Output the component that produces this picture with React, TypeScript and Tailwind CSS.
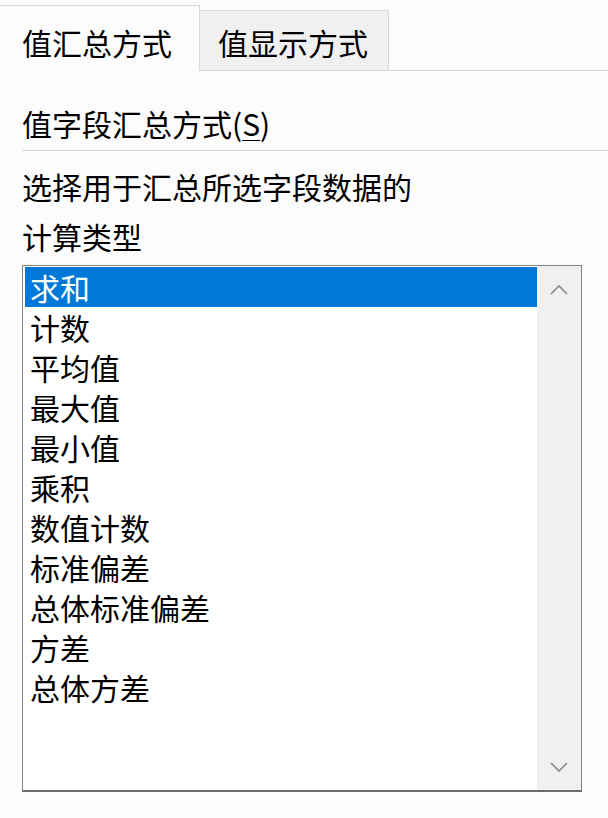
const font = { fontFamily: '"Noto Sans CJK SC", "Noto Sans", sans-serif' }

const items = ["求和", "计数", "平均值", "最大值", "最小值", "乘积", "数值计数", "标准偏差", "总体标准偏差", "方差", "总体方差"]

function Chevron({ up }: { up?: boolean }) {
  return (
    <svg width="20" height="12" viewBox="0 0 20 12" fill="none">
      <polyline
        points={up ? "2,10 10,2 18,10" : "2,2 10,10 18,2"}
        stroke="#8a8a8a"
        strokeWidth="1.6"
      />
    </svg>
  )
}

export default function App() {
  return (
    <div className="w-[608px] h-[818px] bg-[#fcfcfc] text-black text-[30px] overflow-hidden" style={font}>
      <div className="h-[71px] flex items-end border-b border-[#d9d9d9]">
        <div className="h-[66px] w-[200px] -mb-px bg-[#fcfcfc] border-t border-r border-[#d9d9d9] pl-[22px] pt-[16px] leading-[40px]">
          值汇总方式
        </div>
        <div className="h-[60px] w-[189px] bg-[#f0f0f0] border-t border-r border-[#d9d9d9] pl-[18px] pt-[11px] leading-[40px]">
          值显示方式
        </div>
      </div>

      <div className="pl-[22px]">
        <div className="mt-[32px] leading-[40px]">
          值字段汇总方式(<span className="underline underline-offset-4 decoration-1">S</span>)
        </div>
        <div className="mt-[7px] h-px bg-[#d4d4d4]" />
        <p className="mt-[10px] leading-[50px]">
          选择用于汇总所选字段数据的
          <br />
          计算类型
        </p>

        <div className="mt-[4px] w-[560px] h-[527px] bg-white border border-[#828282] border-b-2 border-b-[#6e6e6e] flex">
          <ul className="flex-1 pl-[2px] pt-[1px]">
            {items.map((it, i) => (
              <li
                key={it}
                className={
                  i === 0
                    ? "h-[40px] leading-[40px] pl-[5px] bg-[#0078d7] text-white"
                    : "h-[40px] leading-[40px] pl-[5px]"
                }
              >
                {it}
              </li>
            ))}
          </ul>
          <div className="w-[44px] bg-[#f0f0f0] flex flex-col items-center justify-between pt-[18px] pb-[17px]">
            <Chevron up />
            <Chevron />
          </div>
        </div>
      </div>
    </div>
  )
}
